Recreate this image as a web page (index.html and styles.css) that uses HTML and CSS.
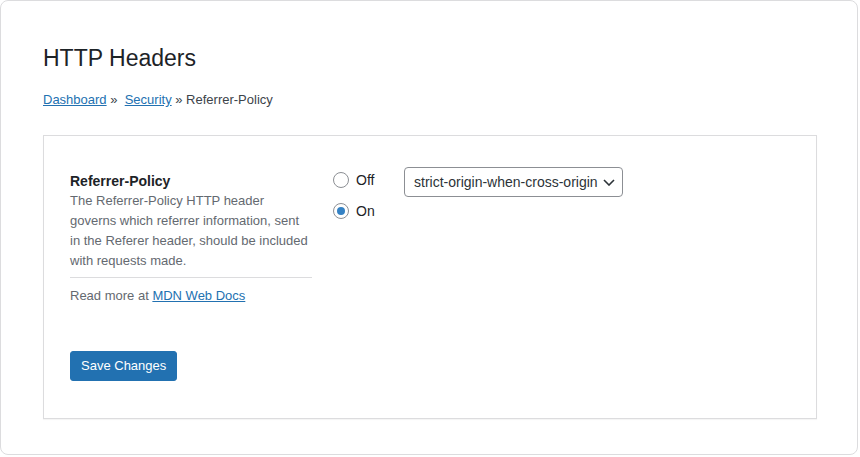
FILE: index.html
```html
<!DOCTYPE html>
<html lang="en">
<head>
<meta charset="utf-8">
<title>HTTP Headers</title>
<link rel="stylesheet" href="styles.css">
</head>
<body>
<div class="frame">
  <h1 class="title">HTTP Headers</h1>
  <nav class="crumbs"><a href="#">Dashboard</a> &raquo;&nbsp; <a href="#">Security</a> &raquo; Referrer-Policy</nav>
  <form class="card">
    <div class="row">
      <div class="info">
        <div class="label">Referrer-Policy</div>
        <p class="desc">The Referrer-Policy HTTP header governs which referrer information, sent in the Referer header, should be included with requests made.</p>
        <hr class="sep">
        <p class="more">Read more at <a href="#">MDN Web Docs</a></p>
      </div>
      <div class="controls">
        <div class="radios">
          <label class="opt"><input type="radio" name="rp" value="off"><span>Off</span></label>
          <label class="opt"><input type="radio" name="rp" value="on" checked><span>On</span></label>
        </div>
        <div class="select-wrap">
          <select class="select">
            <option>strict-origin-when-cross-origin</option>
          </select>
          <svg class="chev" width="12" height="7" viewBox="0 0 12 7" aria-hidden="true"><path d="M1 1 L6 6 L11 1" fill="none" stroke="#2c3338" stroke-width="1.6"/></svg>
        </div>
      </div>
    </div>
    <button type="button" class="btn">Save Changes</button>
  </form>
</div>
</body>
</html>
```
FILE: styles.css
```css
html, body {
  margin: 0;
  padding: 0;
}
body {
  font-family: "Liberation Sans", Arial, sans-serif;
  color: #3c434a;
  background: #ffffff;
}
.frame {
  box-sizing: border-box;
  width: 858px;
  height: 455px;
  border: 1px solid #dcdcde;
  border-radius: 8px;
  background: #fff;
  padding: 42px 40px 0 42px;
}
.title {
  margin: 0;
  font-size: 23px;
  font-weight: 400;
  line-height: 30px;
  color: #1d2327;
}
.crumbs {
  margin-top: 17px;
  font-size: 13px;
  line-height: 20px;
  color: #3c434a;
}
.crumbs a, .more a {
  color: #2271b1;
  text-decoration: underline;
}
.card {
  margin-top: 25px;
  border: 1px solid #dcdcde;
  box-shadow: 0 1px 1px rgba(0,0,0,0.04);
  padding: 31px 26px 37px 26px;
  background: #fff;
}
.row {
  display: flex;
  align-items: flex-start;
  gap: 21px;
}
.info {
  width: 242px;
  padding-top: 4px;
}
.label {
  font-size: 14px;
  font-weight: 700;
  line-height: 20px;
  color: #1d2327;
}
.desc {
  margin: 0;
  font-size: 13px;
  line-height: 20px;
  color: #646970;
}
.sep {
  margin: 6px 0 0 0;
  border: 0;
  border-top: 1px solid #dcdcde;
  height: 0;
}
.more {
  margin: 8px 0 0 0;
  font-size: 13px;
  line-height: 20px;
  color: #646970;
}
.controls {
  display: flex;
  align-items: flex-start;
}
.radios {
  width: 71px;
  padding-top: 3px;
  display: flex;
  flex-direction: column;
  gap: 11px;
}
.opt {
  display: flex;
  align-items: center;
  gap: 7px;
  font-size: 14px;
  line-height: 20px;
  color: #1d2327;
}
.opt input {
  appearance: none;
  -webkit-appearance: none;
  box-sizing: border-box;
  width: 16px;
  height: 16px;
  margin: 0;
  border: 1px solid #8c8f94;
  border-radius: 50%;
  background: #fff;
  display: grid;
  place-items: center;
}
.opt input:checked::before {
  content: "";
  width: 8px;
  height: 8px;
  border-radius: 50%;
  background: #3582c4;
}
.select-wrap {
  position: relative;
}
.select {
  appearance: none;
  -webkit-appearance: none;
  box-sizing: border-box;
  height: 30px;
  padding: 0 24px 0 9px;
  border: 1px solid #8c8f94;
  border-radius: 4px;
  background: #fff;
  font-family: "Liberation Sans", Arial, sans-serif;
  font-size: 14px;
  color: #2c3338;
}
.chev {
  position: absolute;
  right: 8px;
  top: 12px;
}
.btn {
  display: block;
  margin-top: 45px;
  box-sizing: border-box;
  height: 30px;
  padding: 0 10px;
  border: 1px solid #2271b1;
  border-radius: 3px;
  background: #2271b1;
  color: #fff;
  font-family: "Liberation Sans", Arial, sans-serif;
  font-size: 13px;
  line-height: 28px;
}
```
